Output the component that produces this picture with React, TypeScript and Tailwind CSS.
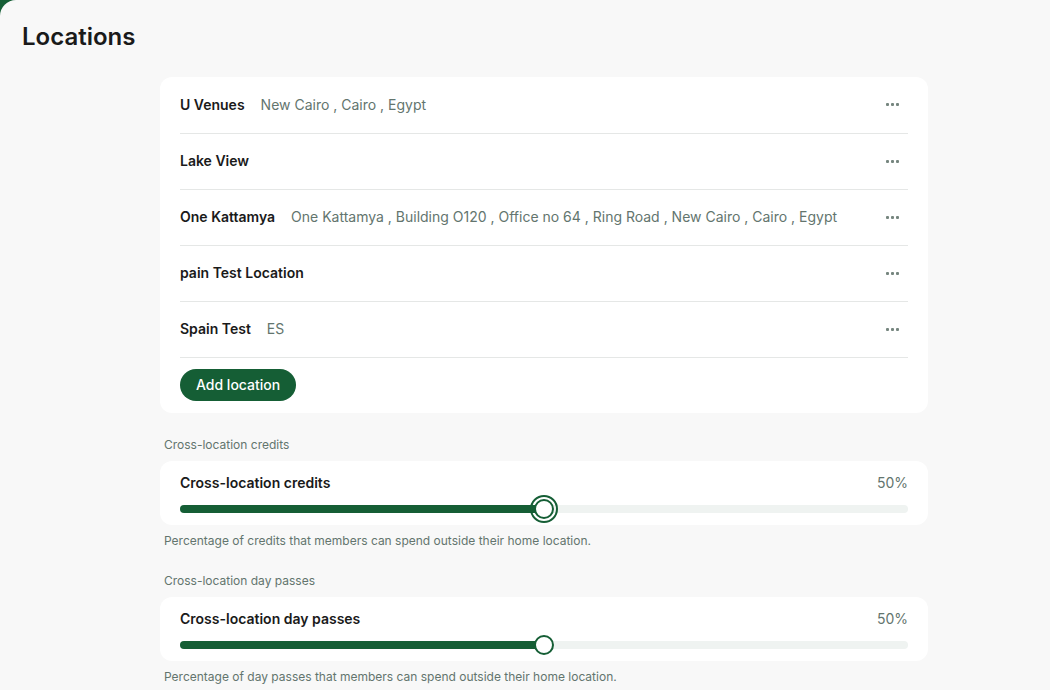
const locations = [
  { name: "U Venues", address: "New Cairo , Cairo , Egypt" },
  { name: "Lake View", address: "" },
  { name: "One Kattamya", address: "One Kattamya , Building O120 , Office no 64 , Ring Road , New Cairo , Cairo , Egypt" },
  { name: "pain Test Location", address: "" },
  { name: "Spain Test", address: "ES" },
];

function Dots() {
  return (
    <button className="flex h-8 w-8 items-center justify-center gap-[2px] pl-px">
      <span className="h-[3px] w-[3px] rounded-[1px] bg-[#76867f]" />
      <span className="h-[3px] w-[3px] rounded-[1px] bg-[#76867f]" />
      <span className="h-[3px] w-[3px] rounded-[1px] bg-[#76867f]" />
    </button>
  );
}

function SliderSection({ title, help, focused }: { title: string; help: string; focused?: boolean }) {
  return (
    <section>
      <div className="h-6 pl-1 text-xs leading-6 text-[#63756e]">{title}</div>
      <div className="mt-1 h-16 rounded-xl bg-white px-5 pt-3">
        <div className="flex h-5 items-center justify-between text-sm leading-5">
          <span className="font-semibold text-[#1a1a1a]">{title}</span>
          <span className="text-[#63756e]">50%</span>
        </div>
        <div className="relative mt-3 h-2 rounded-full bg-[#eff3f1]">
          <div className="h-2 w-1/2 rounded-full bg-[#155e35]" />
          <div className="absolute left-1/2 top-1/2 h-5 w-5 -translate-x-1/2 -translate-y-1/2 rounded-full border-2 border-[#155e35] bg-white" />
          {focused && (
            <div className="absolute left-1/2 top-1/2 h-7 w-7 -translate-x-1/2 -translate-y-1/2 rounded-full border-2 border-[#155e35]" />
          )}
        </div>
      </div>
      <p className="mt-2 pl-1 text-xs leading-4 text-[#63756e]">{help}</p>
    </section>
  );
}

export default function App() {
  return (
    <div className="h-[690px] overflow-hidden bg-[#155e35] font-['Inter',sans-serif] antialiased">
      <div className="h-full overflow-hidden rounded-tl-2xl bg-[#f8f8f8] pl-[22px] pt-[21px]">
        <h1 className="text-2xl font-semibold leading-8 text-[#1a1a1a]">Locations</h1>
        <main className="ml-[138px] mt-6 flex w-[768px] flex-col gap-5">
          <section className="rounded-xl bg-white px-5 pb-3">
            {locations.map((l, i) => (
              <div
                key={l.name}
                className={
                  i === 0
                    ? "flex h-[57px] items-center justify-between border-b border-[#e5e7e6] pb-px text-sm"
                    : "flex h-14 items-center justify-between border-b border-[#e5e7e6] pb-px text-sm"
                }
              >
                <div className="flex gap-4">
                  <span className="font-semibold text-[#1a1a1a]">{l.name}</span>
                  {l.address && <span className="text-[#63756e]">{l.address}</span>}
                </div>
                <Dots />
              </div>
            ))}
            <button className="mt-[11px] h-8 rounded-full bg-[#155e35] px-4 text-sm font-medium text-white">
              Add location
            </button>
          </section>
          <SliderSection
            title="Cross-location credits"
            help="Percentage of credits that members can spend outside their home location."
            focused
          />
          <SliderSection
            title="Cross-location day passes"
            help="Percentage of day passes that members can spend outside their home location."
          />
        </main>
      </div>
    </div>
  );
}
